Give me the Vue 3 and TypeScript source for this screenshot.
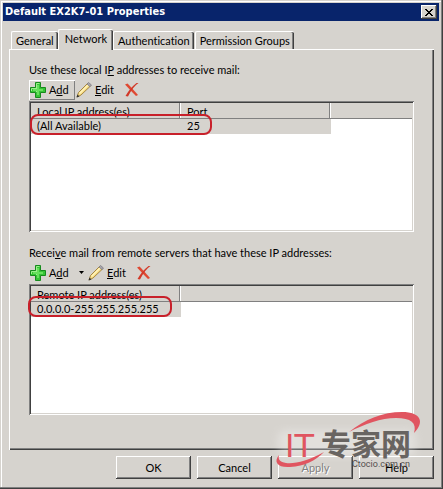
<script setup lang="ts">
import { ref } from 'vue'

interface AddressList {
  id: string
  before: string
  key: string
  after: string
  menu: boolean
  columns: string[]
  rows: string[][]
}

const tabs = ['General', 'Network', 'Authentication', 'Permission Groups']
const activeTab = ref('Network')

const lists: AddressList[] = [
  {
    id: 'local',
    before: 'Use these local I',
    key: 'P',
    after: ' addresses to receive mail:',
    menu: false,
    columns: ['Local IP address(es)', 'Port'],
    rows: [['(All Available)', '25']],
  },
  {
    id: 'remote',
    before: 'Recei',
    key: 'v',
    after: 'e mail from remote servers that have these IP addresses:',
    menu: true,
    columns: ['Remote IP address(es)'],
    rows: [['0.0.0.0-255.255.255.255']],
  },
]
</script>

<template>
  <main class="dialog">
    <header class="titlebar">
      <h1>Default EX2K7-01 Properties</h1>
      <button class="close" type="button" aria-label="Close">
        <svg width="8" height="7" viewBox="0 0 8 7" shape-rendering="crispEdges">
          <path d="M0 0h2v1h1v1h2V1h1V0h2v1H7v1H6v1H5v1h1v1h1v1h1v1H6V6H5V5H3v1H2v1H0V6h1V5h1V4h1V3H2V2H1V1H0z" />
        </svg>
      </button>
    </header>

    <div class="body">
      <nav class="tabs" role="tablist">
        <button
          v-for="tab in tabs"
          :key="tab"
          type="button"
          role="tab"
          class="tab"
          :class="{ active: tab === activeTab }"
          :aria-selected="tab === activeTab"
          @click="activeTab = tab"
        >{{ tab }}</button>
      </nav>

      <section class="panel">
        <div v-for="list in lists" :key="list.id" class="group">
          <h2 :id="list.id">{{ list.before }}<u>{{ list.key }}</u>{{ list.after }}</h2>
          <div class="toolbar">
            <button type="button" class="tool add" :class="{ raised: !list.menu }">
              <svg width="16" height="16" viewBox="0 0 16 16">
                <path d="M5.5 .5h5v5h5v5h-5v5h-5v-5h-5v-5h5z" fill="#35c435" stroke="#168a1c" />
                <path d="M6.5 10V1.5h3M1.5 9V6.5H6" fill="none" stroke="#9df08c" />
                <path d="M8 3v10M3 8h10" stroke="#66e05c" stroke-width="2" />
              </svg>
              <span>A<u>d</u>d</span>
            </button>
            <button v-if="list.menu" type="button" class="tool drop" aria-label="Add options">
              <svg width="5" height="3" viewBox="0 0 5 3"><path d="M0 0h5L2.5 3z" /></svg>
            </button>
            <button type="button" class="tool edit">
              <svg width="16" height="16" viewBox="0 0 16 16">
                <path d="M1 15l1.500-4.500L11.500 1.500l3 2.500L5 13z" fill="#f7dc83" stroke="#a58642" />
                <path d="M3.500 11.500l9-9" stroke="#fff4bd" stroke-width="1.500" />
                <path d="M11 2l1.500-1.500 3 2.500-1.500 1.700z" fill="#a9a6ad" stroke="#77757d" stroke-width=".7" />
                <path d="M.5 15.500l1-3 2 2z" fill="#333" />
              </svg>
              <span><u>E</u>dit</span>
            </button>
            <button type="button" class="tool remove" aria-label="Remove">
              <svg width="16" height="16" viewBox="0 0 16 16">
                <path d="M1 2.500L3.500 1.500Q7 5 14 13l-2 1Q7 9 1 2.500z" fill="#df4932" />
                <path d="M14.500 1Q9 4.500 4 14.500L1.500 14Q6 6 12.500 1z" fill="#d23928" />
              </svg>
            </button>
          </div>
          <div class="listview">
            <table :aria-labelledby="list.id">
              <colgroup>
                <col v-for="column in list.columns" :key="column" class="sized" />
                <col />
              </colgroup>
              <thead>
                <tr>
                  <th v-for="column in list.columns" :key="column" scope="col">{{ column }}</th>
                  <td></td>
                </tr>
              </thead>
              <tbody>
                <tr v-for="row in list.rows" :key="row[0]">
                  <td v-for="cell in row" :key="cell" class="selected">{{ cell }}</td>
                  <td></td>
                </tr>
              </tbody>
            </table>
            <span class="ring" :class="list.id"></span>
          </div>
        </div>
      </section>

      <footer class="actions">
        <button type="button">OK</button>
        <button type="button">Cancel</button>
        <button type="button" disabled>Apply</button>
        <button type="button">Help</button>
      </footer>
    </div>

    <svg class="brand" width="160" height="64" viewBox="0 0 160 64" role="img" aria-label="IT专家网 Ctocio.com.cn">
      <defs>
        <filter id="soft" x="-10%" y="-20%" width="120%" height="140%">
          <feGaussianBlur stdDeviation="4" />
        </filter>
      </defs>
      <rect x="8" y="24" width="138" height="26" rx="8" fill="#fff" opacity=".3" filter="url(#soft)" />
      <path d="M79 26C95 13 113 6 132 6C151 6 155 16 144 27C147 17 141 12 126 12C111 12 95 18 79 26z" fill="#e05560" />
      <path d="M9 49C3 56 8 62 20 61C35 60 45 55 54 46C38 55 25 58 16 57C10 56 8 54 9 49z" fill="#e05560" />
      <text x="15" y="51" class="it">IT</text>
      <text x="51" y="49" class="cn">专家网</text>
      <text x="82" y="61" class="url">Ctocio.com.cn</text>
    </svg>
  </main>
</template>

<style>
body {
  background: #d6d3ce;
}
</style>

<style scoped>
.dialog {
  position: relative;
  display: flex;
  flex-direction: column;
  min-height: 100vh;
  box-sizing: border-box;
  padding: 3px 4px 10px 3px;
  background: #d6d3ce;
  box-shadow: inset -1px -1px #3f3f3f, inset -2px -2px #808080, inset 1px 1px #d6d3ce, inset 2px 2px #fff;
  color: #000;
  font: 11px/14px Lato, "Liberation Sans", Arial, sans-serif;
  font-variant-ligatures: none;
}

button {
  margin: 0;
  padding: 0;
  border: 0;
  background: #d6d3ce;
  color: inherit;
  font: inherit;
  font-variant-ligatures: none;
}

.titlebar {
  display: flex;
  align-items: center;
  justify-content: space-between;
  height: 18px;
  padding: 0 2px;
  background: #08246b;
}

h1 {
  margin: 0;
  color: #fff;
  font: bold 11px/18px "DejaVu Sans Condensed", "DejaVu Sans", sans-serif;
}

.close {
  display: flex;
  align-items: center;
  justify-content: center;
  width: 16px;
  height: 14px;
  box-shadow: inset -1px -1px #404040, inset 1px 1px #fff, inset -2px -2px #808080;
}

.body {
  display: flex;
  flex: 1;
  flex-direction: column;
  padding: 8px 5px 0 6px;
}

.tabs {
  display: flex;
  align-items: flex-end;
  height: 20px;
  padding-left: 2px;
}

.tab {
  height: 18px;
  margin-right: 1px;
  padding: 0 4px;
  border-top: 1px solid #fff;
  border-left: 1px solid #fff;
  border-radius: 2px 2px 0 0;
  box-shadow: inset -1px 0 #404040, inset -2px 0 #808080;
  white-space: nowrap;
}

.tab.active {
  z-index: 1;
  height: 21px;
  margin: 0 0 -1px -1px;
  padding: 0 6px 3px;
}

.panel {
  display: flex;
  flex: 1;
  flex-direction: column;
  gap: 14px;
  padding: 13px 20px 35px 19px;
  border-top: 1px solid #fff;
  border-left: 1px solid #fff;
  box-shadow: inset -1px -1px #404040, inset -2px -2px #808080;
}

.group {
  display: flex;
  flex: 1;
  flex-direction: column;
}

h2 {
  margin: 0;
  font: inherit;
  line-height: 14px;
}

.toolbar {
  display: flex;
  align-items: center;
  height: 21px;
  margin: 2px 0 1px;
}

.tool {
  display: flex;
  align-items: center;
  gap: 3px;
  height: 20px;
}

.add {
  width: 46px;
  padding: 0 1px;
}

.raised {
  box-shadow: inset 1px 1px #fff, inset -1px -1px #808080;
}

.drop {
  padding: 0 3px 0 4px;
}

.edit {
  padding: 0 10px 0 1px;
}

.listview {
  position: relative;
  flex: 1;
  min-height: 120px;
  padding: 2px;
  background: #fff;
  box-shadow: inset 1px 1px #808080, inset -1px -1px #fff, inset 2px 2px #404040, inset -2px -2px #d6d3ce;
}

table {
  width: 100%;
  border-collapse: separate;
  border-spacing: 0;
  table-layout: fixed;
}

.sized {
  width: 150px;
}

th,
td {
  height: 14px;
  padding: 0 6px 1px;
  line-height: 14px;
  font-weight: normal;
  text-align: left;
  white-space: nowrap;
}

thead th,
thead td {
  height: 12px;
  padding: 3px 6px 0;
  border-bottom: 1px solid #808080;
  background: #d6d3ce;
  line-height: 12px;
}

thead th {
  box-shadow: inset -1px 0 #fff, inset -2px 0 #808080;
}

.selected {
  background: #d6d3ce;
}

.ring {
  position: absolute;
  box-sizing: border-box;
  height: 21px;
  border: 2px solid #c8202a;
  border-radius: 8px;
}

.ring.local {
  top: 13px;
  left: 1px;
  width: 182px;
}

.ring.remote {
  top: 12px;
  left: -1px;
  width: 144px;
}

.actions {
  display: flex;
  justify-content: flex-end;
  gap: 6px;
  margin-top: 6px;
}

.actions button {
  width: 75px;
  height: 23px;
  box-shadow: inset -1px -1px #404040, inset 1px 1px #fff, inset -2px -2px #808080;
}

.actions button:disabled {
  color: #808080;
  text-shadow: 1px 1px #fff;
}

.brand {
  position: absolute;
  right: 13px;
  bottom: 19px;
  pointer-events: none;
}

.it {
  fill: #e05560;
  font: 32px "DejaVu Sans", sans-serif;
}

.cn {
  fill: #686461;
  font: bold 30px "Noto Sans CJK SC", sans-serif;
}

.url {
  fill: #55504e;
  font: 9px Roboto, sans-serif;
}
</style>
